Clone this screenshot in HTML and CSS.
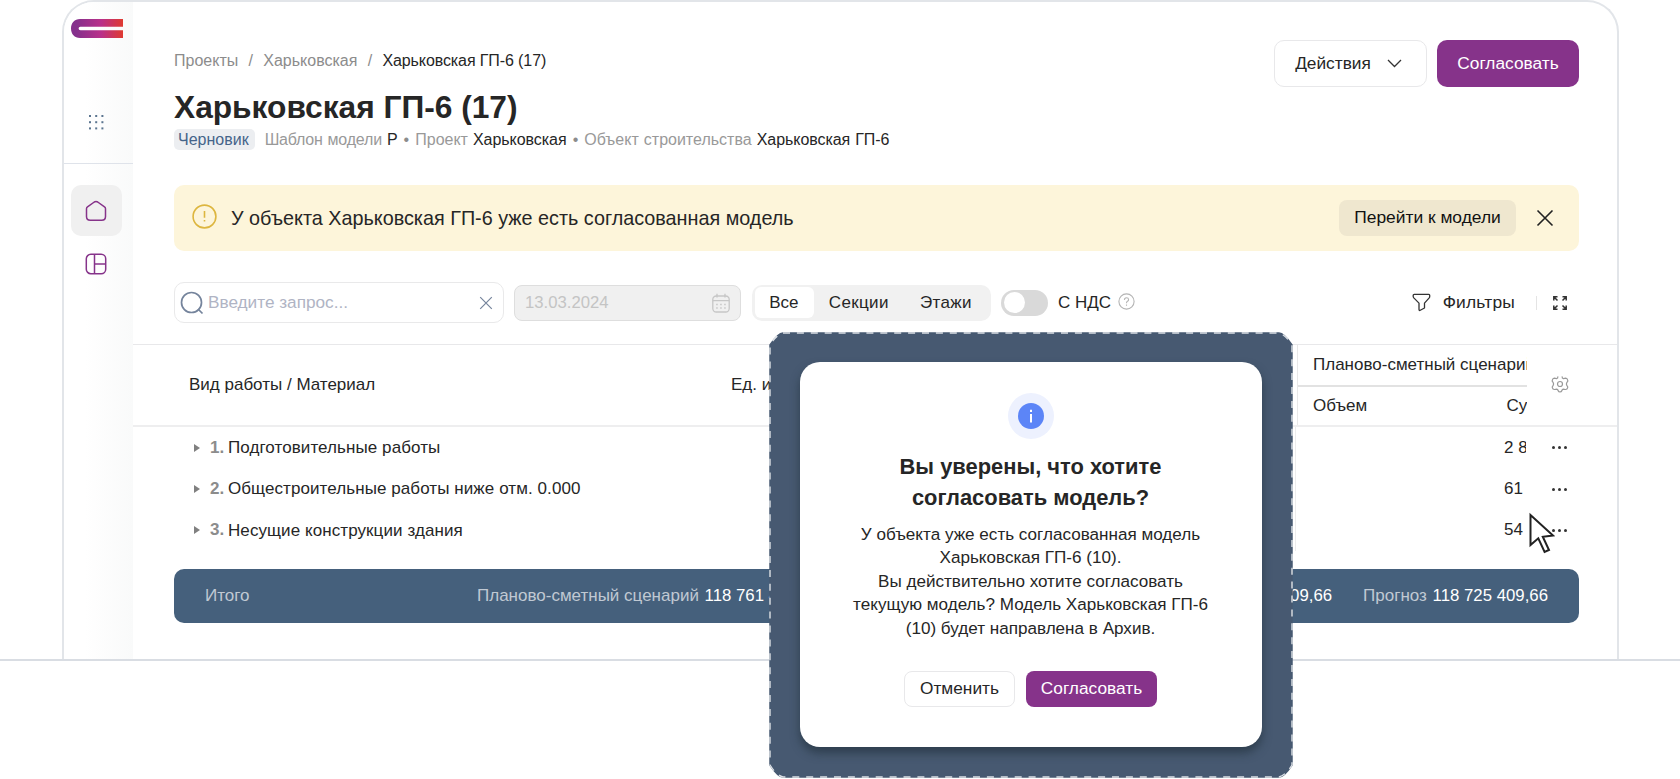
FILE: index.html
```
<!DOCTYPE html>
<html lang="ru">
<head>
    <meta charset="UTF-8">
    <meta name="viewport" content="width=device-width, initial-scale=1.0">
    <title>Харьковская ГП-6 (17)</title>
    <link rel="stylesheet" href="styles.css">
</head>
<body>
    <div class="stage">
        <div class="window">
            <!-- Боковое меню -->
            <aside class="sidebar">
                <div class="sidebar-top">
                    <svg class="logo" width="52" height="19" viewBox="0 0 52 19">
                        <defs>
                            <linearGradient id="logoFill" x1="0" y1="0" x2="1" y2="0">
                                <stop offset="0.1" stop-color="#85308c"/>
                                <stop offset="0.58" stop-color="#b9308a"/>
                                <stop offset="1" stop-color="#df3a30"/>
                            </linearGradient>
                        </defs>
                        <path fill="url(#logoFill)" d="M52 0H9C3.500 0 0 4 0 9.500S3.500 19 9 19H52V11.300H9.500Q7.600 11.300 7.600 9.500T9.500 7.800H52Z"/>
                    </svg>
                    <svg class="apps" width="16" height="16" viewBox="0 0 16 16" fill="#5b7590">
                        <rect x="1" y="1" width="2" height="2"/><rect x="7.200" y="1" width="2" height="2"/><rect x="13.400" y="1" width="2" height="2"/>
                        <rect x="1" y="7.200" width="2" height="2"/><rect x="7.200" y="7.200" width="2" height="2"/><rect x="13.400" y="7.200" width="2" height="2"/>
                        <rect x="1" y="13.400" width="2" height="2"/><rect x="7.200" y="13.400" width="2" height="2"/><rect x="13.400" y="13.400" width="2" height="2"/>
                    </svg>
                </div>
                <nav class="menu">
                    <a class="menu-item active">
                        <svg width="22" height="22" viewBox="0 0 22 22" fill="none" stroke="#86338a" stroke-width="1.500" stroke-linejoin="round">
                            <path d="M1.500 8.800Q1.500 7.600 2.500 6.900L9.300 2Q11 .900 12.700 2L19.500 6.900Q20.500 7.600 20.500 8.800V16.500Q20.500 20.300 16.700 20.300H5.300Q1.500 20.300 1.500 16.500Z"/>
                        </svg>
                    </a>
                    <a class="menu-item">
                        <svg width="22" height="22" viewBox="0 0 22 22" fill="none" stroke="#86338a" stroke-width="1.500">
                            <rect x="1.300" y="1.300" width="19.400" height="19.400" rx="4.500"/>
                            <path d="M9.500 1.300V20.700M9.500 11H20.700"/>
                        </svg>
                    </a>
                </nav>
            </aside>

            <main class="content">
                <header class="page-head">
                    <div>
                        <div class="crumbs">
                            <span>Проекты</span><span>/</span><span>Харьковская</span><span>/</span><span class="current">Харьковская ГП-6 (17)</span>
                        </div>
                        <h1>Харьковская ГП-6 (17)</h1>
                        <div class="meta">
                            <span class="tag">Черновик</span>
                            <span><span class="template">Шаблон модели</span> <b>Р</b> <i>•</i> Проект <b>Харьковская</b> <i>•</i> Объект строительства <b>Харьковская ГП-6</b></span>
                        </div>
                    </div>
                    <div class="head-buttons">
                        <button class="btn btn-actions">Действия
                            <svg width="15" height="9" viewBox="0 0 15 9" fill="none" stroke="#333" stroke-width="1.300"><path d="M1 1L7.500 7.500L14 1"/></svg>
                        </button>
                        <button class="btn btn-primary">Согласовать</button>
                    </div>
                </header>

                <!-- Предупреждение -->
                <div class="alert">
                    <svg class="alert-icon" width="25" height="25" viewBox="0 0 25 25" fill="none" stroke="#ddb63f" stroke-width="1.600">
                        <circle cx="12.500" cy="12.500" r="11.400"/>
                        <path d="M12.500 7V13.800M12.500 16V17.600"/>
                    </svg>
                    <span class="alert-text">У объекта Харьковская ГП-6 уже есть согласованная модель</span>
                    <button class="alert-btn">Перейти к модели</button>
                    <svg class="alert-close" width="18" height="18" viewBox="0 0 18 18" fill="none" stroke="#222" stroke-width="1.600"><path d="M1.500 1.500L16.500 16.500M16.500 1.500L1.500 16.500"/></svg>
                </div>

                <!-- Панель инструментов -->
                <div class="toolbar">
                    <div class="search">
                        <svg width="24" height="24" viewBox="0 0 24 24" fill="none" stroke="#75849c" stroke-width="1.700"><circle cx="11.500" cy="11.500" r="10"/><path d="M18 18L22.500 22.500"/></svg>
                        <span>Введите запрос...</span>
                        <svg width="14" height="14" viewBox="0 0 14 14" fill="none" stroke="#75849c" stroke-width="1.200"><path d="M1.200 1.200L12.800 12.800M12.800 1.200L1.200 12.800"/></svg>
                    </div>
                    <div class="date">
                        <span>13.03.2024</span>
                        <svg width="18" height="20" viewBox="0 0 18 20" fill="none" stroke="#c6c6c6" stroke-width="1.300">
                            <rect x=".8" y="3" width="16.400" height="16" rx="3.500"/>
                            <path d="M.8 7.700H17.200M5 .700V4.500M13 .700V4.500"/>
                            <path stroke-dasharray="1.500 2.500" d="M4.200 11.500H14.500M4.200 15H14.500"/>
                        </svg>
                    </div>
                    <div class="segments">
                        <span class="segment selected">Все</span>
                        <span class="segment">Секции</span>
                        <span class="segment">Этажи</span>
                    </div>
                    <div class="toggle"></div>
                    <span class="vat">С НДС</span>
                    <svg class="help" width="17" height="17" viewBox="0 0 17 17" fill="none" stroke="#b4b4b4" stroke-width="1.100">
                        <circle cx="8.500" cy="8.500" r="7.600"/>
                        <path d="M6.400 6.900Q6.500 4.800 8.500 4.800T10.600 6.700Q10.600 7.700 9.500 8.300T8.500 10.200M8.500 11.500V12.700"/>
                    </svg>
                    <div class="filters">
                        <svg width="19" height="19" viewBox="0 0 19 19" fill="none" stroke="#333" stroke-width="1.300" stroke-linejoin="round"><path d="M2.200 1.300H16.800Q17.700 1.300 17.700 2.200V3.600Q17.700 4.300 17.200 4.900L12.500 10.100V15L7.800 17.500Q7 17.500 7 16.600V10.100L1.800 4.900Q1.200 4.200 1.200 3.600V2.200Q1.200 1.300 2.200 1.300Z"/></svg>
                        <span>Фильтры</span>
                    </div>
                    <svg class="expand" width="14" height="14" viewBox="0 0 14 14" fill="none" stroke="#333" stroke-width="1.500">
                        <path d="M.8 4.500V.8H4.500M1 1L4.500 4.500M9.500 .8H13.200V4.500M13 1L9.500 4.500M.8 9.500V13.200H4.500M1 13L4.500 9.500M13.200 9.500V13.200H9.500M13 13L9.500 9.500"/>
                    </svg>
                </div>

                <!-- Таблица -->
                <div class="table">
                    <div class="table-head">
                        <span class="col-name">Вид работы / Материал</span>
                        <span class="col-unit">Ед. изм.</span>
                        <div class="col-plan">
                            <div class="plan-title">Планово-сметный сценарий</div>
                            <div class="plan-sub"><span>Объем</span><span>Сумма</span></div>
                        </div>
                        <svg class="gear" width="18" height="18" viewBox="0 0 18 18" fill="none" stroke="#999" stroke-width="1.200" stroke-linejoin="round">
                            <circle cx="9" cy="9" r="2.500"/>
                            <path d="M6.800 1.300Q7.200 3.200 5.600 3.700L3.200 3.200Q1.500 3.500 1.200 5.600Q1 6.600 2 7.200Q3.200 9 2 10.800Q1 11.600 1.300 12.700Q1.800 14.600 3.500 14.500L5.800 14.100Q7 14.500 7.200 15.800Q7.600 17 9 17T10.800 15.800Q11 14.500 12.200 14.100L14.500 14.500Q16.200 14.600 16.700 12.700Q17 11.600 16 10.800Q14.800 9 16 7.200Q17 6.600 16.800 5.600Q16.500 3.500 14.800 3.200L12.400 3.700Q10.800 3.200 11.200 1.300"/>
                        </svg>
                    </div>
                    <div class="rows">
                        <div class="row"><i class="arrow"></i><b>1.</b><span class="name">Подготовительные работы</span><span class="sum">2 880</span><span class="dots"><i></i><i></i><i></i></span></div>
                        <div class="row"><i class="arrow"></i><b>2.</b><span class="name">Общестроительные работы ниже отм. 0.000</span><span class="sum">61</span><span class="dots"><i></i><i></i><i></i></span></div>
                        <div class="row"><i class="arrow"></i><b>3.</b><span class="name">Несущие конструкции здания</span><span class="sum">54</span><span class="dots"><i></i><i></i><i></i></span></div>
                    </div>
                </div>

                <div class="total">
                    <span class="total-label">Итого</span>
                    <span class="total-plan">Планово-сметный сценарий <b>118 761 409,66</b></span>
                    <span class="total-fact"><b>118 725 409,66</b></span>
                    <span class="total-forecast">Прогноз <b>118 725 409,66</b></span>
                </div>
            </main>
        </div>
    </div>

    <!-- Окно подтверждения -->
    <div class="overlay">
        <svg class="overlay-frame" width="524" height="446" viewBox="0 0 524 446">
            <path fill="#475971" stroke="#475971" stroke-width="1.500" d="M14 1H510Q515 1 523 13V433Q515 445 510 445H14Q9 445 1 433V13Q9 1 14 1Z"/>
            <path fill="none" stroke="#dde1e6" stroke-width="1.400" stroke-dasharray="7 6.900" d="M14 1H510Q517 3 523 13V433Q517 443 510 445H14Q7 443 1 433V13Q7 3 14 1Z"/>
        </svg>
        <div class="dialog">
            <div class="info">
                <svg width="26" height="26" viewBox="0 0 26 26"><circle cx="13" cy="13" r="13" fill="#5c85f7"/><path d="M13 11V19.500M13 6.800V9" stroke="#fff" stroke-width="2"/></svg>
            </div>
            <h2>Вы уверены, что хотите<br>согласовать модель?</h2>
            <p>У объекта уже есть согласованная модель<br>Харьковская ГП-6 (10).<br>Вы действительно хотите согласовать<br>текущую модель? Модель Харьковская ГП-6<br>(10) будет направлена в Архив.</p>
            <div class="dialog-buttons">
                <button class="btn btn-small btn-cancel">Отменить</button>
                <button class="btn btn-small btn-primary">Согласовать</button>
            </div>
        </div>
    </div>

    <svg class="cursor" width="28" height="44" viewBox="0 0 28 44" fill="#fff" stroke="#222" stroke-width="2">
        <path d="M2.500 4V34L10.300 27.300L16.600 41L21 39L14.800 25.800L25 24.500Z"/>
    </svg>
</body>
</html>
```
FILE: styles.css
```
* {
    box-sizing: border-box;
}

body {
    margin: 0;
    width: 1680px;
    height: 779px;
    overflow: hidden;
    position: relative;
    background: #fff;
    color: #262626;
    font-family: "Liberation Sans", Arial, sans-serif;
    font-size: 17px;
}

svg {
    display: block;
    flex-shrink: 0;
}

button {
    font-family: inherit;
    white-space: nowrap;
}

.stage {
    height: 661px;
    padding: 0 61px 0 62px;
    border-bottom: 2px solid #d9dde3;
}

.window {
    display: flex;
    height: 659px;
    border: 2px solid #e2e5e9;
    border-bottom: none;
    border-radius: 32px 32px 0 0;
    overflow: hidden;
}

/* Sidebar */
.sidebar {
    width: 69px;
    flex-shrink: 0;
    background: linear-gradient(to right, #fff 30%, #f9fafa);
}

.sidebar-top {
    height: 162px;
    padding: 17px 0 0 7px;
    border-bottom: 1px solid #dfe3ea;
}

.apps {
    margin: 76px 0 0 17px;
}

.menu {
    display: flex;
    flex-direction: column;
    gap: 2px;
    padding: 21px 0 0 7px;
}

.menu-item {
    display: flex;
    align-items: center;
    justify-content: center;
    width: 51px;
    height: 51px;
    padding-right: 1px;
    border-radius: 10px;
}

.menu-item.active {
    background: #f0f0f0;
}

/* Page header */
.content {
    flex: 1;
    min-width: 0;
}

.page-head {
    display: flex;
    justify-content: space-between;
    height: 183px;
    padding: 38px 38px 0 41px;
}

.crumbs {
    display: flex;
    gap: 10.3px;
    margin-top: 9px;
    line-height: 24px;
    font-size: 16px;
    color: #8c8c8c;
}

.crumbs .current {
    color: #262626;
    letter-spacing: -0.1px;
}

h1 {
    margin: 16px 0 4px;
    font-size: 31.7px;
    line-height: 36px;
}

.meta {
    display: flex;
    align-items: center;
    gap: 10px;
    height: 21px;
    font-size: 16px;
    color: #999;
    white-space: nowrap;
}

.meta b {
    font-weight: normal;
    color: #262626;
    letter-spacing: -0.05px;
}

.meta i {
    margin: 0 1px;
    font-style: normal;
    color: #8c8c8c;
}

.meta .template {
    letter-spacing: -0.2px;
}

.meta > span + span {
    word-spacing: 0.6px;
}

.tag {
    padding: 0 6px 0 4px;
    border-radius: 5px;
    line-height: 21px;
    background: #eceef1;
    color: #45648a;
}

.head-buttons {
    display: flex;
    gap: 10px;
}

.btn {
    display: flex;
    align-items: center;
    justify-content: center;
    width: 142px;
    height: 47px;
    padding: 0 0 1px;
    border: none;
    border-radius: 10px;
    font-size: 17.3px;
    color: #262626;
    background: #fff;
}

.btn-actions {
    width: 153px;
    gap: 16px;
    padding-right: 4px;
    border: 1.5px solid #e8e8ea;
}

.btn-primary {
    background: #86338a;
    color: #fff;
}

/* Alert */
.alert {
    display: flex;
    align-items: center;
    height: 66px;
    margin: 0 38px 0 41px;
    padding: 0 25px 0 18px;
    border-radius: 10px;
    background: #fdf5da;
}

.alert-icon {
    margin-bottom: 4px;
}

.alert-text {
    flex: 1;
    margin-left: 14px;
    font-size: 19.8px;
}

.alert-btn {
    width: 177px;
    height: 36px;
    padding: 0 0 1px;
    border: none;
    border-radius: 8px;
    background: #efe7cf;
    font-size: 17.4px;
    color: #111;
}

.alert-close {
    margin-left: 20px;
}

/* Toolbar */
.toolbar {
    display: flex;
    align-items: center;
    height: 93px;
    padding: 10px 50px 0 41px;
}

.search {
    display: flex;
    align-items: center;
    width: 330px;
    height: 41px;
    padding: 0 10px 0 5px;
    border: 1.5px solid #e9e9ea;
    border-radius: 10px;
    font-size: 17.2px;
    color: #b0b4c4;
}

.search span {
    flex: 1;
    margin-left: 4px;
}

.date {
    display: flex;
    align-items: center;
    justify-content: space-between;
    width: 227px;
    height: 36px;
    margin: 0 11px 0 10px;
    padding: 0 10px;
    border: 1px solid #dedede;
    border-radius: 8px;
    background: #f0f0f0;
    font-size: 16.7px;
    color: #c4c4c4;
}

.segments {
    display: flex;
    height: 36px;
    width: 239px;
    padding: 2.5px;
    border-radius: 10px;
    background: #f1f1f1;
}

.segment {
    display: flex;
    align-items: center;
    justify-content: center;
    width: 89px;
    padding-left: 2px;
    letter-spacing: 0.35px;
}

.segment.selected {
    width: 61px;
    padding: 0 1px 0 0;
    border-radius: 6px;
    background: #fff;
    letter-spacing: 0;
}

.toggle {
    width: 47px;
    height: 26px;
    margin: 0 10px;
    padding: 2.5px;
    border-radius: 13px;
    background: #d9d9d9;
}

.toggle::before {
    content: "";
    display: block;
    width: 21px;
    height: 21px;
    border-radius: 50%;
    background: #fff;
}

.help {
    margin: 0 0 3px 7px;
}

.filters {
    display: flex;
    align-items: center;
    gap: 12px;
    margin-left: auto;
    padding-right: 21px;
    font-size: 17.4px;
    letter-spacing: 0.2px;
}

.expand {
    box-sizing: content-box;
    padding-left: 16px;
    border-left: 1px solid #e4e4e4;
}

/* Table */
.table {
    border-top: 1.5px solid #e8e8ea;
}

.table-head {
    display: flex;
    align-items: center;
    height: 82px;
    padding-left: 56px;
    border-bottom: 2px solid #eeeeef;
}

.col-name {
    width: 542px;
}

.col-unit {
    width: 566px;
}

.col-plan {
    width: 230px;
    height: 80px;
    overflow: hidden;
    white-space: nowrap;
    border-left: 1px solid #e8e8e8;
}

.plan-title {
    height: 42px;
    padding-left: 15px;
    line-height: 40px;
    border-bottom: 2px solid #e2e2e2;
}

.plan-sub {
    display: flex;
    padding-left: 15px;
    line-height: 38px;
}

.plan-sub span {
    width: 193.5px;
    flex-shrink: 0;
}

.gear {
    margin: 0 0 3px 24px;
}

.rows {
    height: 125px;
    width: 1434px;
}

.row {
    display: flex;
    align-items: center;
    height: 41.4px;
    padding-left: 61px;
}

.arrow {
    border: 4.5px solid transparent;
    border-left: 6px solid #808080;
    border-right: none;
}

.row b {
    width: 18px;
    margin-left: 10px;
    color: #8c8c8c;
}

.name {
    width: 1069px;
    border-right: 1px solid #ececec;
    line-height: 41.4px;
    letter-spacing: 0.08px;
}

.sum {
    width: 22px;
    margin-left: 208px;
    overflow: hidden;
    white-space: nowrap;
}

.dots {
    display: flex;
    gap: 3px;
    margin-left: 26px;
}

.dots i {
    width: 3px;
    height: 3px;
    border-radius: 50%;
    background: #333;
}

.total {
    display: flex;
    align-items: center;
    height: 54px;
    margin: 17px 38px 0 41px;
    padding: 0 31px;
    border-radius: 10px;
    background: #45607c;
    color: #c0c9d3;
    white-space: nowrap;
}

.total b {
    margin-left: 1px;
    font-size: 16.8px;
    font-weight: normal;
    color: #fff;
}

.total-label {
    width: 272px;
}

.total-fact {
    margin-left: auto;
}

.total-forecast {
    margin-left: 31px;
}

/* Dialog */
.overlay {
    position: absolute;
    left: 769px;
    top: 332px;
    width: 524px;
    height: 446px;
    padding: 30px 31px;
}

.overlay-frame {
    position: absolute;
    left: 0;
    top: 0;
}

.dialog {
    position: relative;
    display: flex;
    flex-direction: column;
    align-items: center;
    height: 385px;
    padding: 31px 1px 0 0;
    border-radius: 20px;
    background: #fff;
    box-shadow: 0 6px 10px rgba(30, 45, 55, 0.6);
    text-align: center;
}

.info {
    display: flex;
    align-items: center;
    justify-content: center;
    width: 46px;
    height: 46px;
    border-radius: 50%;
    background: #edf1fe;
}

h2 {
    margin: 12px 0 10px;
    font-size: 21.9px;
    line-height: 31px;
}

.dialog p {
    margin: 0;
    font-size: 17.1px;
    line-height: 23.4px;
}

.dialog-buttons {
    display: flex;
    gap: 11px;
    margin-top: 31px;
}

.btn-small {
    width: 131px;
    height: 36px;
    border-radius: 8px;
}

.btn-cancel {
    width: 111px;
    border: 1.5px solid #e8e8ea;
}

.cursor {
    position: absolute;
    left: 1528px;
    top: 511px;
}
```
